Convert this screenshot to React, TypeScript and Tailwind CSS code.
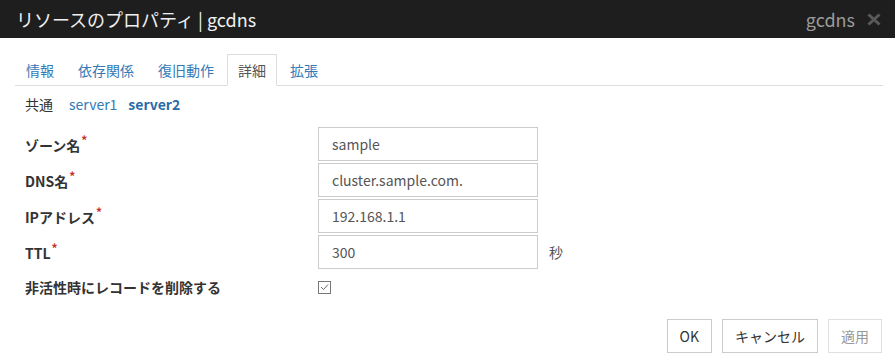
import React from 'react';

const font = { fontFamily: '"Noto Sans CJK JP", "Noto Sans", sans-serif' };

const tabs = ['情報', '依存関係', '復旧動作', '詳細', '拡張'];

const fields = [
  { label: 'ゾーン名', value: 'sample' },
  { label: 'DNS名', value: 'cluster.sample.com.' },
  { label: 'IPアドレス', value: '192.168.1.1' },
  { label: 'TTL', value: '300', unit: '秒' },
];

function Required({ text }: { text: string }) {
  return (
    <span className="text-[14px] font-bold text-[#333]">
      {text}
      <sup className="ml-[1px] text-[12px] text-[#c9302c]">*</sup>
    </span>
  );
}

export default function App() {
  return (
    <div className="w-[895px] h-[360px] bg-white overflow-hidden" style={font}>
      {/* title bar */}
      <div className="h-[38px] bg-[#1e1e1e] flex items-center justify-between pl-[16px] pr-[14px]">
        <div className="text-[18px] leading-none text-[#f0f0f0]">リソースのプロパティ | gcdns</div>
        <div className="flex items-center gap-[12px]">
          <span className="text-[18px] leading-none text-[#9a9a9a]">gcdns</span>
          <svg width="14" height="13" viewBox="0 0 14 13">
            <path d="M1.5 1.5 L12.5 11.5 M12.5 1.5 L1.5 11.5" stroke="#5a5a5a" strokeWidth="3" />
          </svg>
        </div>
      </div>

      <div className="pl-[15px] pr-[12px]">
        {/* tabs */}
        <div className="mt-[16px] flex border-b border-[#ddd]">
          {tabs.map((t) => (
            <div
              key={t}
              className={`-mb-px mr-[2px] h-[32px] px-[10px] flex items-center text-[14px] border ${
                t === '詳細'
                  ? 'border-[#ddd] border-b-white bg-white text-[#555]'
                  : 'border-transparent text-[#337ab7]'
              }`}
            >
              {t}
            </div>
          ))}
        </div>

        {/* server sub tabs */}
        <div className="mt-[8px] h-[20px] flex items-center text-[14px] pl-[10px]">
          <span className="text-[#333]">共通</span>
          <span className="ml-[16px] text-[#337ab7]">server1</span>
          <span className="ml-[11px] font-bold text-[#2a6aa6]">server2</span>
        </div>

        {/* form */}
        <div className="mt-[13px] flex flex-col gap-[2px] pl-[10px]">
          {fields.map((f) => (
            <div key={f.label} className="flex items-center h-[34px]">
              <div className="w-[293px]">
                <Required text={f.label} />
              </div>
              <div className="w-[220px] h-[34px] border border-[#ccc] flex items-center px-[13px] text-[14px] text-[#555]">
                {f.value}
              </div>
              {f.unit && <span className="ml-[11px] text-[14px] text-[#555]">{f.unit}</span>}
            </div>
          ))}
          <div className="mt-[6px] flex items-center h-[20px]">
            <div className="w-[293px] text-[14px] font-bold text-[#333]">非活性時にレコードを削除する</div>
            <div className="w-[13px] h-[13px] border border-[#777] flex items-center justify-center">
              <svg width="9" height="8" viewBox="0 0 9 8">
                <path d="M1 4 L3.5 6.5 L8 1.5" stroke="#666" strokeWidth="1" fill="none" />
              </svg>
            </div>
          </div>
        </div>

        {/* buttons */}
        <div className="mt-[22px] flex justify-end gap-[10px] pr-[1px]">
          <button className="h-[34px] px-[12px] border border-[#ccc] bg-white text-[14px] text-[#333]">OK</button>
          <button className="h-[34px] px-[12px] border border-[#ccc] bg-white text-[14px] text-[#333]">キャンセル</button>
          <button className="h-[34px] px-[12px] border border-[#e0e0e0] bg-white text-[14px] text-[#999]">適用</button>
        </div>
      </div>
    </div>
  );
}
